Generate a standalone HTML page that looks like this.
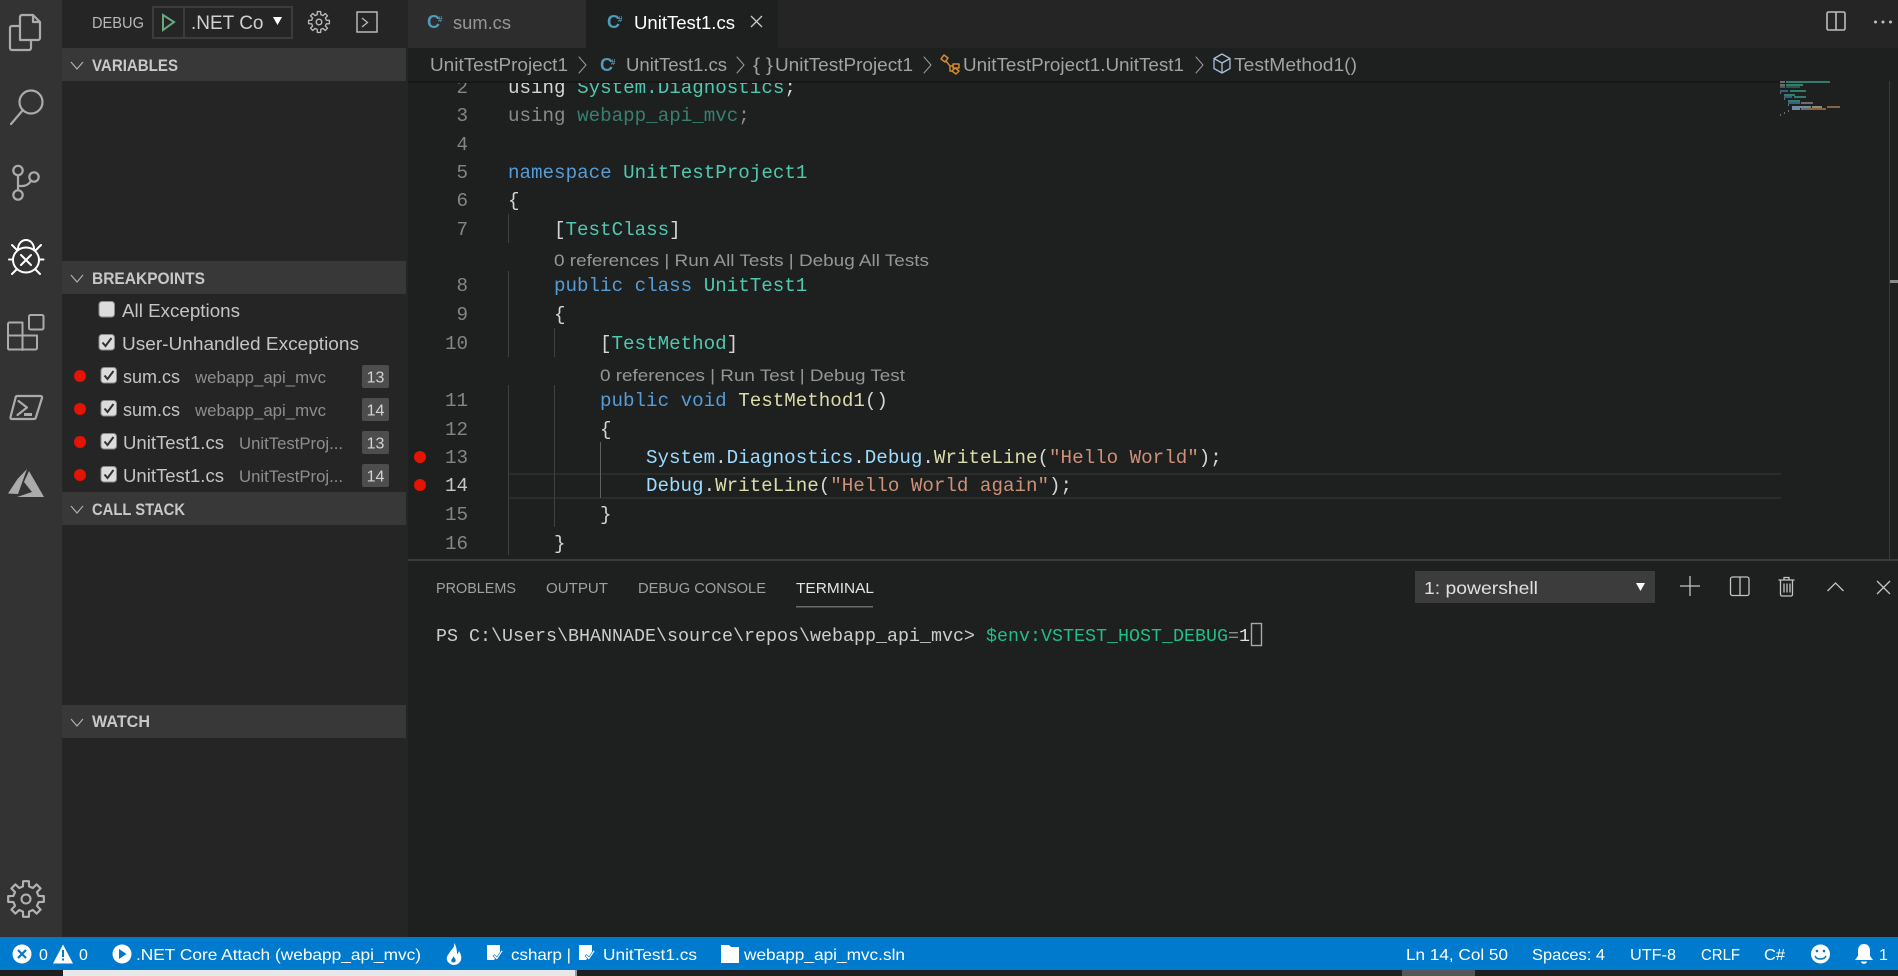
<!DOCTYPE html>
<html lang="en"><head><meta charset="utf-8"><title>VS Code Debug</title>
<style>
html,body{margin:0;padding:0;background:#1e1f1f;width:1898px;height:976px;overflow:hidden}
svg{display:block}
text{white-space:pre}
.s{font-family:"Liberation Sans",sans-serif}
.m{font-family:"Liberation Mono",monospace;font-size:19.2px}
.t{font-family:"Liberation Mono",monospace;font-size:18.33px}
.h{font-family:"Liberation Sans",sans-serif;font-size:16.5px;font-weight:bold;fill:#c8c8c8}
.n{font-family:"Liberation Mono",monospace;font-size:19.2px;fill:#858585;text-anchor:end}
.ic{fill:none;stroke:#ababab;stroke-width:2.2;stroke-linejoin:round;stroke-linecap:round}
.w{font-family:"Liberation Sans",sans-serif;font-size:16px;fill:#fff}
.b{font-family:"Liberation Sans",sans-serif;font-size:18px;fill:#c4c4c4}
.d{font-family:"Liberation Sans",sans-serif;font-size:17px;fill:#8e8e8e}
.bc{font-family:"Liberation Sans",sans-serif;font-size:18px;fill:#a2a2a2}
.cl{font-family:"Liberation Sans",sans-serif;font-size:17px;fill:#969696}
.p{font-family:"Liberation Sans",sans-serif;font-size:15px;fill:#a0a0a0}
.k{fill:#569cd6}.c{fill:#4ec9b0}.l{fill:#d4d4d4}.v{fill:#9cdcfe}.f{fill:#dcdcaa}.q{fill:#ce9178}
</style></head><body>
<svg xmlns="http://www.w3.org/2000/svg" width="1898" height="976" viewBox="0 0 1898 976">
<defs>
<clipPath id="nc"><rect x="186" y="6" width="78" height="32"/></clipPath>
<clipPath id="ed"><rect x="408" y="81" width="1490" height="478"/></clipPath>
</defs>
<!-- base -->
<rect width="1898" height="976" fill="#1e1f1f"/>
<rect x="62" y="0" width="346" height="937" fill="#252526"/>
<rect x="0" y="0" width="62" height="937" fill="#333333"/>
<rect x="408" y="0" width="1490" height="48" fill="#252526"/>
<rect x="408" y="0" width="178" height="48" fill="#2d2d2d"/>
<rect x="586" y="0" width="192" height="48" fill="#1e1f1f"/>

<!-- editor -->
<g clip-path="url(#ed)">
<rect x="509" y="473" width="1272" height="2" fill="#2b2c2c"/>
<rect x="509" y="497" width="1272" height="2" fill="#2b2c2c"/>
<g fill="#404040">
<rect x="508" y="214" width="1" height="29"/><rect x="508" y="271" width="1" height="86"/><rect x="508" y="385" width="1" height="170"/>
<rect x="554" y="328" width="1" height="29"/><rect x="554" y="385" width="1" height="142"/>
</g>
<rect x="600" y="442" width="1" height="56" fill="#606060"/>
<text class="n" x="468" y="93">2</text>
<text class="n" x="468" y="121">3</text>
<text class="n" x="468" y="150">4</text>
<text class="n" x="468" y="178">5</text>
<text class="n" x="468" y="206">6</text>
<text class="n" x="468" y="235">7</text>
<text class="n" x="468" y="291">8</text>
<text class="n" x="468" y="320">9</text>
<text class="n" x="468" y="349">10</text>
<text class="n" x="468" y="406">11</text>
<text class="n" x="468" y="435">12</text>
<text class="n" x="468" y="463">13</text>
<text class="n" x="468" y="491" style="fill:#c6c6c6">14</text>
<text class="n" x="468" y="520">15</text>
<text class="n" x="468" y="549">16</text>

<text class="m" x="508" y="93"><tspan class="l">using </tspan><tspan class="c">System.Diagnostics</tspan><tspan class="l">;</tspan></text>
<text class="m" x="508" y="121"><tspan fill="#8a8a8a">using </tspan><tspan fill="#37806f">webapp_api_mvc</tspan><tspan fill="#8a8a8a">;</tspan></text>
<text class="m" x="508" y="178"><tspan class="k">namespace </tspan><tspan class="c">UnitTestProject1</tspan></text>
<text class="m l" x="508" y="206">{</text>
<text class="m" x="554" y="235"><tspan class="l">[</tspan><tspan class="c">TestClass</tspan><tspan class="l">]</tspan></text>
<text class="cl" x="554" y="266" textLength="375" lengthAdjust="spacingAndGlyphs">0 references | Run All Tests | Debug All Tests</text>
<text class="m" x="554" y="291"><tspan class="k">public class </tspan><tspan class="c">UnitTest1</tspan></text>
<text class="m l" x="554" y="320">{</text>
<text class="m" x="600" y="349"><tspan class="l">[</tspan><tspan class="c">TestMethod</tspan><tspan class="l">]</tspan></text>
<text class="cl" x="600" y="381" textLength="305" lengthAdjust="spacingAndGlyphs">0 references | Run Test | Debug Test</text>
<text class="m" x="600" y="406"><tspan class="k">public void </tspan><tspan class="f">TestMethod1</tspan><tspan class="l">()</tspan></text>
<text class="m l" x="600" y="435">{</text>
<text class="m" x="646" y="463"><tspan class="v">System</tspan><tspan class="l">.</tspan><tspan class="v">Diagnostics</tspan><tspan class="l">.</tspan><tspan class="v">Debug</tspan><tspan class="l">.</tspan><tspan class="f">WriteLine</tspan><tspan class="l">(</tspan><tspan class="q">"Hello World"</tspan><tspan class="l">);</tspan></text>
<text class="m" x="646" y="491"><tspan class="v">Debug</tspan><tspan class="l">.</tspan><tspan class="f">WriteLine</tspan><tspan class="l">(</tspan><tspan class="q">"Hello World again"</tspan><tspan class="l">);</tspan></text>
<text class="m l" x="600" y="520">}</text>
<text class="m l" x="554" y="549">}</text>
<circle cx="420" cy="457" r="6" fill="#e51400"/>
<circle cx="420" cy="485" r="6" fill="#e51400"/>
</g>

<!-- minimap -->
<g opacity=".72">
<g fill="#8a8a8a"><rect x="1780" y="81" width="5" height="2"/><rect x="1780" y="84" width="5" height="2"/><rect x="1780" y="86" width="5" height="2" opacity=".7"/><rect x="1780" y="92" width="1" height="2"/><rect x="1784" y="98" width="1" height="2"/><rect x="1788" y="104" width="1" height="2"/><rect x="1801" y="102" width="12" height="2"/><rect x="1801" y="108" width="8" height="2"/><rect x="1788" y="110" width="1" height="2"/><rect x="1784" y="112" width="1" height="2"/><rect x="1780" y="114" width="1" height="2"/></g>
<g fill="#3aa08c"><rect x="1786" y="81" width="44" height="2"/><rect x="1786" y="84" width="17" height="2"/><rect x="1786" y="86" width="14" height="2" opacity=".6"/><rect x="1790" y="90" width="16" height="2"/><rect x="1784" y="94" width="11" height="2"/><rect x="1794" y="96" width="12" height="2"/><rect x="1788" y="100" width="12" height="2"/></g>
<g fill="#3f7aa8"><rect x="1780" y="90" width="8" height="2"/><rect x="1784" y="96" width="8" height="2"/><rect x="1788" y="102" width="12" height="2"/></g>
<g fill="#8fb6cf"><rect x="1792" y="106" width="19" height="2"/><rect x="1792" y="108" width="8" height="2"/></g>
<rect x="1812" y="106" width="10" height="2" fill="#b8b890"/>
<g fill="#b57c4e"><rect x="1827" y="106" width="13" height="2"/><rect x="1809" y="108" width="17" height="2"/></g>
</g>
<rect x="1889" y="81" width="1" height="478" fill="#3a3a3a"/>
<rect x="1890" y="280" width="8" height="3" fill="#8a8a8a"/>

<!-- breadcrumbs -->
<rect x="408" y="48" width="1490" height="33" fill="#1e1f1f"/>
<rect x="408" y="81" width="1372" height="2" fill="#171717"/>
<text class="bc" x="430" y="71" textLength="138" lengthAdjust="spacingAndGlyphs">UnitTestProject1</text>
<path class="ic" style="stroke:#9a9a9a;stroke-width:1" d="M579 57l7 8-7 8M737 57l7 8-7 8M924 57l7 8-7 8M1196 57l7 8-7 8"/>
<text class="s" x="600" y="71" font-size="18" font-weight="bold" fill="#519aba">C</text><text class="s" x="611" y="65" font-size="8" font-weight="bold" fill="#519aba">#</text>
<text class="bc" x="626" y="71" textLength="101" lengthAdjust="spacingAndGlyphs">UnitTest1.cs</text>
<text class="bc" x="753" y="71" textLength="20" lengthAdjust="spacingAndGlyphs">{ }</text>
<text class="bc" x="775" y="71" textLength="138" lengthAdjust="spacingAndGlyphs">UnitTestProject1</text>
<g fill="none" stroke="#d08a2e" stroke-width="1.5" stroke-linejoin="round"><path d="M941 59l3-4 4 3-3 4zM953 64h6v4h-6zM952 71l3-3 4 3-3 3z"/><path d="M946 61l4 5h4M950 66v5h3"/></g>
<text class="bc" x="963" y="71" textLength="221" lengthAdjust="spacingAndGlyphs">UnitTestProject1.UnitTest1</text>
<g fill="none" stroke="#a9bdd6" stroke-width="1.3" stroke-linejoin="round"><path d="M1222 54l8 4.5v10l-8 4.500-8-4.500v-10z"/><path d="M1214 58.500l8 4.500 8-4.500M1222 63v10"/></g>
<text class="bc" x="1234" y="71" textLength="123" lengthAdjust="spacingAndGlyphs">TestMethod1()</text>

<!-- tabs -->
<text class="s" x="427" y="28" font-size="18" font-weight="bold" fill="#519aba">C</text><text class="s" x="438" y="22" font-size="8" font-weight="bold" fill="#519aba">#</text>
<text class="s" x="453" y="29" font-size="18" fill="#969696" textLength="58" lengthAdjust="spacingAndGlyphs">sum.cs</text>
<text class="s" x="607" y="28" font-size="18" font-weight="bold" fill="#519aba">C</text><text class="s" x="618" y="22" font-size="8" font-weight="bold" fill="#519aba">#</text>
<text class="s" x="634" y="29" font-size="18" fill="#ffffff" textLength="101" lengthAdjust="spacingAndGlyphs">UnitTest1.cs</text>
<path d="M751 16l11 11M762 16l-11 11" stroke="#c8c8c8" stroke-width="1.3" fill="none"/>
<!-- top right -->
<rect x="1827" y="12" width="18" height="18" rx="1.5" fill="none" stroke="#bdbdbd" stroke-width="1.6"/><path d="M1836 12v18" stroke="#bdbdbd" stroke-width="1.6"/>
<g fill="#c0c0c0"><circle cx="1875.500" cy="22" r="1.500"/><circle cx="1883" cy="22" r="1.500"/><circle cx="1890.500" cy="22" r="1.500"/></g>

<!-- activity bar icons -->
<path class="ic" d="M20 40V17a2 2 0 0 1 2-2h11l7 7v16a2 2 0 0 1-2 2H20zM33 15v7h7"/>
<path class="ic" d="M20 26h-8a2 2 0 0 0-2 2v20a2 2 0 0 0 2 2h17a2 2 0 0 0 2-2v-8"/>
<circle class="ic" cx="31" cy="102" r="11.500"/><path class="ic" d="M23 110l-12 14"/>
<circle class="ic" cx="18" cy="170.500" r="4.700"/><circle class="ic" cx="34" cy="177" r="4.700"/><circle class="ic" cx="18" cy="195" r="4.700"/>
<path class="ic" d="M18 175.500v14.500M31 181c-2 3-5 5-9 5h-4"/>
<g fill="none" stroke="#fff" stroke-width="2" stroke-linecap="round"><ellipse cx="26" cy="260" rx="13" ry="12.500"/><path d="M18 249a8 9 0 0 1 16 0"/><path d="M21 255l10 10M31 255l-10 10M12 245l5 5M41 245l-5 5M9 259.500h3M40 259.500h3.500M12 274l5-5M40 274l-5-5"/></g>
<g class="ic" style="stroke-width:2"><rect x="29" y="315" width="14.500" height="14.500" rx="1.500"/><path d="M22.500 322.500h-13a1.500 1.500 0 0 0-1.500 1.500v24.500a1.500 1.500 0 0 0 1.500 1h26a1.500 1.500 0 0 0 1.500-1.500v-12.500H9M22.500 322.500V350"/></g>
<path class="ic" d="M17 396h24a1.500 1.500 0 0 1 1 2l-6 19a2 2 0 0 1-2 2H11.500a1.500 1.500 0 0 1-1-2l5-19a2 2 0 0 1 1.500-2z"/>
<path class="ic" d="M18.500 401l8.500 6.500-9.500 7.500"/><path d="M24 414.500h8" stroke="#ababab" stroke-width="3"/>
<path fill="#ababab" d="M27 469L17.500 479 8 493.500l10 .5zM29 471l-5 11 8 10-15 5h27z"/>
<g fill="none" stroke="#b2b2b2" stroke-linejoin="round"><path transform="translate(26 899) scale(.18)" stroke-width="12" d="M70-17 99-16 99 16 70 17 61 38 81 59 59 81 38 61 17 70 16 99-16 99-17 70-38 61-59 81-81 59-61 38-70 17-99 16-99-16-70-17-61-38-81-59-59-81-38-61-17-70-16-99 16-99 17-70 38-61 59-81 81-59 61-38Z"/><circle cx="26" cy="899" r="4.500" stroke-width="2"/></g>

<!-- debug toolbar -->
<text class="s" x="92" y="28" font-size="16" fill="#b8b8b8" textLength="52" lengthAdjust="spacingAndGlyphs">DEBUG</text>
<rect x="153" y="7" width="139" height="31" fill="none" stroke="#3c3c3c" stroke-width="2"/><path d="M184 7v31" stroke="#3c3c3c" stroke-width="2"/>
<path d="M163 15l11 7-11 8z" fill="none" stroke="#6aa77e" stroke-width="2"/>
<text class="s" x="191" y="29" font-size="19" fill="#d0d0d0" clip-path="url(#nc)">.NET Core</text>
<path d="M273 17h9l-4.500 8z" fill="#fff"/>
<g fill="none" stroke="#b8b8b8" stroke-linejoin="round"><path transform="translate(319 22) scale(.105)" stroke-width="13" d="M70-17 99-16 99 16 70 17 61 38 81 59 59 81 38 61 17 70 16 99-16 99-17 70-38 61-59 81-81 59-61 38-70 17-99 16-99-16-70-17-61-38-81-59-59-81-38-61-17-70-16-99 16-99 17-70 38-61 59-81 81-59 61-38Z"/><circle cx="319" cy="22" r="2.800" stroke-width="1.400"/></g>
<rect x="357" y="12" width="20" height="20" fill="none" stroke="#b8b8b8" stroke-width="1.500"/><path d="M362 18l5.500 4.500-5.500 4.500" fill="none" stroke="#b8b8b8" stroke-width="1.300"/>

<!-- section headers -->
<g fill="#383838"><rect x="62" y="48" width="344" height="33"/><rect x="62" y="261" width="344" height="33"/><rect x="62" y="492" width="344" height="33"/><rect x="62" y="705" width="344" height="33"/></g>
<path d="M71 62l6 7 6-7M71 275l6 7 6-7M71 506l6 7 6-7M71 719l6 7 6-7" fill="none" stroke="#b4b4b4" stroke-width="1.100"/>
<text class="h" x="92" y="71" textLength="86" lengthAdjust="spacingAndGlyphs">VARIABLES</text>
<text class="h" x="92" y="284" textLength="113" lengthAdjust="spacingAndGlyphs">BREAKPOINTS</text>
<text class="h" x="92" y="515" textLength="93" lengthAdjust="spacingAndGlyphs">CALL STACK</text>
<text class="h" x="92" y="727" textLength="58" lengthAdjust="spacingAndGlyphs">WATCH</text>

<!-- breakpoints -->
<g fill="#dcdcdc" stroke="#8c8c8c" stroke-width="1">
<rect x="99" y="301.500" width="15.500" height="15.500" rx="3"/><rect x="99" y="334.500" width="15.500" height="15.500" rx="3"/>
<rect x="101" y="367.500" width="15.500" height="15.500" rx="3"/><rect x="101" y="400.500" width="15.500" height="15.500" rx="3"/><rect x="101" y="433.500" width="15.500" height="15.500" rx="3"/><rect x="101" y="466.500" width="15.500" height="15.500" rx="3"/>
</g>
<path d="M102.500 342.500l3 3.500 6-8M104.500 375.500l3 3.500 6-8M104.500 408.500l3 3.500 6-8M104.500 441.500l3 3.500 6-8M104.500 474.500l3 3.500 6-8" fill="none" stroke="#333" stroke-width="2"/>
<text class="b" x="122" y="317" textLength="118" lengthAdjust="spacingAndGlyphs">All Exceptions</text>
<text class="b" x="122" y="350" textLength="237" lengthAdjust="spacingAndGlyphs">User-Unhandled Exceptions</text>
<g fill="#e51400"><circle cx="80" cy="376" r="6"/><circle cx="80" cy="409" r="6"/><circle cx="80" cy="442" r="6"/><circle cx="80" cy="475" r="6"/></g>
<text class="b" x="123" y="383" textLength="57" lengthAdjust="spacingAndGlyphs">sum.cs</text>
<text class="d" x="195" y="383" textLength="131" lengthAdjust="spacingAndGlyphs">webapp_api_mvc</text>
<text class="b" x="123" y="416" textLength="57" lengthAdjust="spacingAndGlyphs">sum.cs</text>
<text class="d" x="195" y="416" textLength="131" lengthAdjust="spacingAndGlyphs">webapp_api_mvc</text>
<text class="b" x="123" y="449" textLength="101" lengthAdjust="spacingAndGlyphs">UnitTest1.cs</text>
<text class="d" x="239" y="449" textLength="104" lengthAdjust="spacingAndGlyphs">UnitTestProj...</text>
<text class="b" x="123" y="482" textLength="101" lengthAdjust="spacingAndGlyphs">UnitTest1.cs</text>
<text class="d" x="239" y="482" textLength="104" lengthAdjust="spacingAndGlyphs">UnitTestProj...</text>
<g fill="#4d4d4d"><rect x="362" y="365" width="27" height="23" rx="2"/><rect x="362" y="398" width="27" height="23" rx="2"/><rect x="362" y="431" width="27" height="23" rx="2"/><rect x="362" y="464" width="27" height="23" rx="2"/></g>
<g class="s" font-size="16" fill="#d4d4d4" text-anchor="middle"><text x="375.500" y="382.500">13</text><text x="375.500" y="415.500">14</text><text x="375.500" y="448.500">13</text><text x="375.500" y="481.500">14</text></g>

<!-- panel -->
<rect x="408" y="559" width="1490" height="2" fill="#3a3a3a"/>
<text class="p" x="436" y="593" textLength="80" lengthAdjust="spacingAndGlyphs">PROBLEMS</text>
<text class="p" x="546" y="593" textLength="62" lengthAdjust="spacingAndGlyphs">OUTPUT</text>
<text class="p" x="638" y="593" textLength="128" lengthAdjust="spacingAndGlyphs">DEBUG CONSOLE</text>
<text class="p" x="796" y="593" textLength="78" lengthAdjust="spacingAndGlyphs" style="fill:#e4e4e4">TERMINAL</text>
<rect x="796" y="606" width="77" height="1.500" fill="#6a6a6a"/>
<text class="t" x="436" y="641" fill="#cccccc">PS C:\Users\BHANNADE\source\repos\webapp_api_mvc&gt;</text>
<text class="t" x="986" y="641" fill="#1fbf85">$env:VSTEST_HOST_DEBUG</text>
<text class="t" x="1228" y="641" fill="#8a8a8a">=</text>
<text class="t" x="1239" y="641" fill="#e0e0e0">1</text>
<rect x="1251.500" y="623.500" width="10" height="22" fill="none" stroke="#a8a8a8" stroke-width="1.400"/>
<rect x="1415" y="571" width="240" height="32" fill="#3c3c3c"/>
<text class="s" x="1424" y="594" font-size="17.500" fill="#e0e0e0" textLength="114" lengthAdjust="spacingAndGlyphs">1: powershell</text>
<path d="M1636 583h9l-4.500 8z" fill="#fff"/>
<path d="M1680 586h20M1690 576v20" stroke="#c4c4c4" stroke-width="1.300" fill="none"/>
<rect x="1730.500" y="577" width="18.500" height="18.500" rx="2" fill="none" stroke="#c4c4c4" stroke-width="1.300"/><path d="M1740 577v18.500" stroke="#c4c4c4" stroke-width="1.300"/>
<g fill="none" stroke="#c4c4c4" stroke-width="1.300"><path d="M1778.500 580h16M1784 580v-2.500h5v2.500M1780.500 580v14.500a1.500 1.500 0 0 0 1.500 1.500h9a1.500 1.500 0 0 0 1.500-1.500V580M1784 583.500v9M1787 583.500v9M1790 583.500v9"/></g>
<path d="M1827.500 591l8-8 8 8" fill="none" stroke="#c4c4c4" stroke-width="1.300"/>
<path d="M1877 581l13 13M1890 581l-13 13" fill="none" stroke="#c4c4c4" stroke-width="1.300"/>

<!-- status bar -->
<rect x="0" y="937" width="1898" height="33" fill="#007acc"/>
<rect x="63" y="970" width="514" height="6" fill="#e8e8e8"/><rect x="575" y="970" width="2" height="6" fill="#9a9a9a"/>
<rect x="1402" y="970" width="73" height="6" fill="#565656"/>
<circle cx="22" cy="954" r="9.500" fill="#fff"/><path d="M18 950l8 8M26 950l-8 8" stroke="#007acc" stroke-width="2.200"/>
<text class="w" x="39" y="960">0</text>
<path d="M63 944.500l10 19H53z" fill="#fff"/><path d="M63 950v7M63 958.500v2" stroke="#007acc" stroke-width="2"/>
<text class="w" x="79" y="960">0</text>
<circle cx="122" cy="954" r="9.500" fill="#fff"/><path d="M119 949l7.500 5-7.500 5z" fill="#007acc"/>
<text class="w" x="136" y="960" textLength="285" lengthAdjust="spacingAndGlyphs">.NET Core Attach (webapp_api_mvc)</text>
<path fill="#fff" d="M454 943c1 4-2 6-4 9s-4 5-3 8c1 3 4 5 7 5s6-2 7-5c1-4-1-7-2-9-1 2-1 3-2 3 0-4-1-9-3-11zm-.500 13c.500 2 3 3 2 5.500-.500 1-3 1.500-4 0-1-2 1.500-3 2-5.500z"/>
<g fill="#fff"><path d="M487 945h13v9l-3 3-3 3h-7z"/><path d="M503 951l-6 9-4-4 1.500-1.500 2.500 2.500 4.500-7z" stroke="#007acc" stroke-width=".6"/></g>
<text class="w" x="511" y="960" textLength="60" lengthAdjust="spacingAndGlyphs">csharp |</text>
<g fill="#fff"><path d="M579 945h13v9l-3 3-3 3h-7z"/><path d="M595 951l-6 9-4-4 1.500-1.500 2.500 2.500 4.500-7z" stroke="#007acc" stroke-width=".6"/></g>
<text class="w" x="603" y="960" textLength="94" lengthAdjust="spacingAndGlyphs">UnitTest1.cs</text>
<path d="M721 945h8l2 2h8v16h-18z" fill="#fff"/>
<text class="w" x="744" y="960" textLength="161" lengthAdjust="spacingAndGlyphs">webapp_api_mvc.sln</text>
<text class="w" x="1406" y="960" textLength="102" lengthAdjust="spacingAndGlyphs">Ln 14, Col 50</text>
<text class="w" x="1532" y="960" textLength="73" lengthAdjust="spacingAndGlyphs">Spaces: 4</text>
<text class="w" x="1630" y="960" textLength="46" lengthAdjust="spacingAndGlyphs">UTF-8</text>
<text class="w" x="1701" y="960" textLength="39" lengthAdjust="spacingAndGlyphs">CRLF</text>
<text class="w" x="1764" y="960" textLength="21" lengthAdjust="spacingAndGlyphs">C#</text>
<circle cx="1820.500" cy="954" r="9.500" fill="#fff"/><circle cx="1817" cy="951" r="1.300" fill="#007acc"/><circle cx="1824" cy="951" r="1.300" fill="#007acc"/><path d="M1815 956c2 4 9 4 11 0" fill="none" stroke="#007acc" stroke-width="1.500"/>
<path d="M1864 944c-4 0-6 3-6 7v5l-3 4h18l-3-4v-5c0-4-2-7-6-7zM1861 961.500h6c0 3-6 3-6 0z" fill="#fff"/>
<text class="w" x="1879" y="960">1</text>
</svg>
</body></html>
